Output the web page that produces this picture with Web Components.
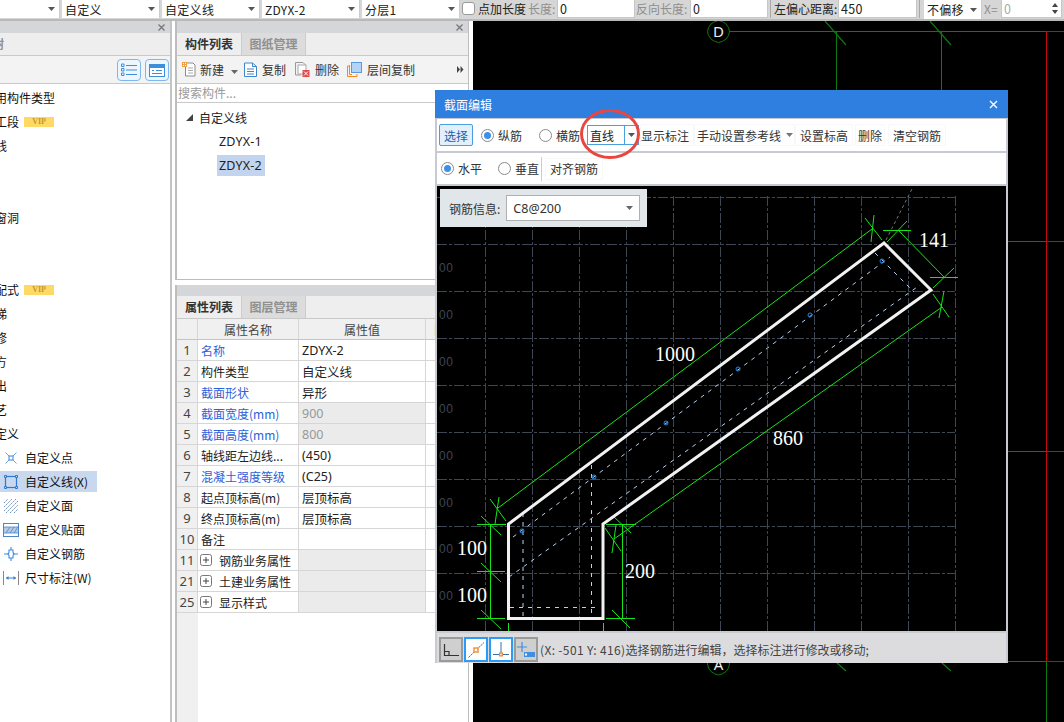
<!DOCTYPE html>
<html lang="zh"><head><meta charset="utf-8"><title>截面编辑</title>
<style>
html,body{margin:0;padding:0;height:100%;overflow:hidden;background:#fff}
body{position:relative;width:1064px;height:722px;font:12px "Noto Sans CJK SC","Noto Sans",sans-serif;color:#222;display:flex;flex-direction:column}
</style></head><body>
<app-bar></app-bar>
<work-area></work-area>
<section-dialog></section-dialog>
<script>
const FONT='"Noto Sans","Noto Sans CJK SC",sans-serif';
function def(name,css,html,init){
  customElements.define(name,class extends HTMLElement{
    constructor(){super();const r=this.attachShadow({mode:'open'});
      r.innerHTML='<style>:host{box-sizing:border-box}*{box-sizing:border-box}'+css+'</style>'+(typeof html==='function'?html(this):html);
      if(init)init(r,this);}
  });
}
const caret=(c='#555')=>`<svg width="7" height="4" viewBox="0 0 7 4" style="flex:none"><path d="M0 0h7L3.500 4z" fill="${c}"/></svg>`;

/* ---- top toolbar ---- */
def('tb-select',`:host{display:flex;align-items:center;height:18px;background:#fff;padding:0 4px 0 3px;flex:none;white-space:nowrap;border-right:1px solid #ccc}
 span{flex:1;font-size:12px;color:#222;letter-spacing:.3px;overflow:hidden}`,`<span><slot></slot></span>${caret()}`);
def('tb-input',`:host{display:flex;align-items:center;height:18px;background:#fff;padding:0 2px;flex:none;border:1px solid #c6c6c6;border-top:0;font-size:12.500px;letter-spacing:.3px}
 :host([off]){color:#aaa}`,`<slot></slot>`);
def('app-bar',`:host{display:flex;flex:none;height:21px;background:#d6d6d6;border-bottom:2px solid #b9b9b9;gap:2px;white-space:nowrap;font-size:12px;color:#222;overflow:hidden}
 .g{color:#8e8e8e}.t{flex:none;height:18px;line-height:18px}.sep{width:1px;height:18px;background:#a9a9a9;flex:none}
 .ck{width:13px;height:13px;background:#fff;border:1px solid #9a9a9a;border-radius:3px;flex:none;margin-top:2px}
 .spin{margin-left:auto;display:flex;flex-direction:column;gap:3px;margin-right:1px}
 .tri{width:0;height:0;border:3px solid transparent;border-top:0;border-bottom:4px solid #444;box-sizing:content-box}.tri.d{transform:rotate(180deg)}`,
`<tb-select style="width:98px;margin-left:-38px"></tb-select>
 <tb-select style="width:98px">自定义</tb-select><tb-select style="width:98px">自定义线</tb-select>
 <tb-select style="width:98px;font-family:${FONT}">ZDYX-2</tb-select><tb-select style="width:98px">分层1</tb-select>
 <span class="ck"></span><span class="t" style="margin-left:1px;width:49px">点加长度</span><span class="t g" style="margin-left:-1px;width:27px">长度:</span>
 <tb-input style="width:78px;font-family:${FONT}">0</tb-input><span class="t g" style="margin-left:-1px;width:52px">反向长度:</span>
 <tb-input style="width:78px;font-family:${FONT}">0</tb-input><span class="sep"></span>
 <span class="t" style="margin-left:1px;width:62px">左偏心距离:</span><tb-input style="width:79px;font-family:${FONT}">450</tb-input>
 <span class="sep"></span><tb-select style="width:58px;margin-left:2px;height:19px">不偏移</tb-select>
 <span class="t g" style="width:15px">X=</span><tb-input off style="width:61px;font-family:${FONT}">0<span class="spin"><i class="tri"></i><i class="tri d"></i></span></tb-input>
 <span class="t" style="font-family:${FONT}">m</span>`);

/* ---- shared panel bits ---- */
def('panel-head',`:host{display:flex;justify-content:flex-end;align-items:center;height:12px;background:#d4d6da;padding-right:5px;flex:none;color:#777}
 svg{display:block}`,`<svg width="7" height="7" viewBox="0 0 7 7"><path d="M.5.500l6 6M6.500.500l-6 6" stroke="#777" stroke-width="1.300"/></svg>`);
def('tab-row',`:host{display:flex;height:23px;background:#eee;border-bottom:1px solid #c9c9c9;flex:none;font-size:12px;line-height:22px;white-space:nowrap}
 ::slotted(b){width:64px;text-align:center;font-weight:700;color:#333;flex:none}
 ::slotted(i){width:65px;text-align:center;font-style:normal;font-weight:700;color:#909090;background:#dcdcdc;border-left:1px solid #ccc;border-right:1px solid #ccc;flex:none}`,`<slot></slot>`);

/* ---- left panel ---- */
def('vip-tag',`:host{display:inline-flex;align-items:center;justify-content:center;width:30px;height:10px;background:#ffd966;color:#c39a2a;font:bold 8px "Liberation Serif",serif;margin-left:5px;flex:none}`,`VIP`);
const leftIcons={
 point:'<path d="M2.500 2.500l3.500 3.500M13.500 2.500L10 6M2.500 13.500L6 10M13.500 13.500L10 10" stroke="#6aa6e6"/><rect x="6" y="6" width="4" height="4" fill="none" stroke="#3b82d8"/>',
 line:'<rect x="2.500" y="2.500" width="11" height="11" fill="none" stroke="#2f78d4" stroke-width="1.200"/><path d="M1.500 1.500h2v2h-2zM12.500 1.500h2v2h-2zM1.500 12.500h2v2h-2zM12.500 12.500h2v2h-2z" fill="#c7d8ef" stroke="#2f78d4"/>',
 hatch:'<path d="M1 5l4-4M1 9l8-8M1 13l12-12M3 15L15 3M7 15l8-8M11 15l4-4" stroke="#6f8fb8" stroke-dasharray="2 1"/>',
 patch:'<rect x=".5" y="1.500" width="15" height="13" fill="none" stroke="#4a86c8"/><rect x="1" y="5" width="14" height="6" fill="#b8cbe6"/><path d="M.5 5h15M.5 11h15M3 11l4-6M7 11l4-6M11 11l4-6" stroke="#4a86c8" stroke-width=".8"/>',
 rebar:'<path d="M8 1v3M8 12v3M1 8h3c1.500 0 2-1 2-2V4h4v2c0 1 .5 2 2 2h3M4 8c1.500 0 2 1 2 2v2h4v-2c0-1 .5-2 2-2" fill="none" stroke="#3f8ae0" stroke-width="1.100"/>',
 dim:'<path d="M.5 1v14" stroke="#888"/><path d="M15.500 1v14" stroke="#888"/><path d="M3 8h10" stroke="#3f7fc8"/><path d="M3 8l2.500-2v4zM13 8l-2.500-2v4z" fill="#3f7fc8"/>'
};
def('tree-row',`:host{display:flex;align-items:center;height:21px;margin-bottom:3px;white-space:nowrap;font-size:12px;color:#111}
 :host([cut]){margin-left:-17px}
 :host([sub]){width:97px;padding-left:3px}
 :host([sel]){background:#c7d8ef}
 .ic{width:16px;height:16px;margin-right:6px;flex:none}`,
 h=>{const i=h.getAttribute('icon');return (i?`<svg class="ic" viewBox="0 0 16 16">${leftIcons[i]}</svg>`:'')+'<slot></slot>'});
def('left-panel',`:host{display:flex;flex-direction:column;width:172px;flex:none;overflow:hidden;background:#fff;border-right:2px solid #c4c4c4}
 .tools{display:flex;justify-content:flex-end;gap:4px;padding:3px 1px 2px;height:28px;background:#f3f3f3;border-bottom:1px solid #c9c9c9;flex:none}
 .btn{width:24px;height:22px;border:1px solid #7db7ee;border-radius:4px;background:#eef6fd;display:flex;align-items:center;justify-content:center}
 .list{padding-top:3px;flex:1}
 .tab{margin-left:-32px;color:#909090;font-size:12px;line-height:22px;flex:none;white-space:nowrap;font-weight:700}`,
`<panel-head></panel-head>
 <tab-row><span class="tab">导航树</span></tab-row>
 <div class="tools">
  <span class="btn"><svg width="16" height="14" viewBox="0 0 16 14"><path d="M5 2.500h11M5 7h11M5 11.500h11" stroke="#3d8fdc"/><path d="M.5 1h2.500v2.500H.5zM.5 5.500h2.500V8H.5zM.5 10h2.500v2.500H.5z" fill="none" stroke="#3d8fdc"/></svg></span>
  <span class="btn"><svg width="16" height="13" viewBox="0 0 16 13"><rect x=".5" y=".5" width="15" height="12" fill="#fff" stroke="#3d8fdc"/><rect x="1" y="1" width="14" height="3" fill="#3d8fdc"/><path d="M3 6.500h2M7 6.500h6M3 9.500h10" stroke="#3d8fdc"/></svg></span>
 </div>
 <div class="list">
  <tree-row cut>常用构件类型</tree-row>
  <tree-row cut>施工段<vip-tag></vip-tag></tree-row>
  <tree-row cut>轴线</tree-row><tree-row></tree-row><tree-row></tree-row>
  <tree-row cut>门窗洞</tree-row><tree-row></tree-row><tree-row></tree-row>
  <tree-row cut>装配式<vip-tag></vip-tag></tree-row>
  <tree-row cut>楼梯</tree-row><tree-row cut>装修</tree-row><tree-row cut>土方</tree-row>
  <tree-row cut>挑出</tree-row><tree-row cut>工艺</tree-row><tree-row cut>自定义</tree-row>
  <tree-row sub icon="point">自定义点</tree-row>
  <tree-row sub sel icon="line">自定义线(X)</tree-row>
  <tree-row sub icon="hatch">自定义面</tree-row>
  <tree-row sub icon="patch">自定义贴面</tree-row>
  <tree-row sub icon="rebar">自定义钢筋</tree-row>
  <tree-row sub icon="dim">尺寸标注(W)</tree-row>
 </div>`);

/* ---- component list ---- */
def('comp-panel',`:host{display:flex;flex-direction:column;height:259px;flex:none;background:#fff;border:solid #bdbdbd;border-width:0 1px 1px 2px}
 .tools{display:flex;align-items:center;height:28px;background:#f3f3f3;border-bottom:1px solid #c9c9c9;flex:none;white-space:nowrap;color:#333;font-size:12px;padding-left:5px}
 .tools svg{flex:none}.tools span{flex:none}
 .more{margin-left:auto;margin-right:4px}
 .search{height:19px;line-height:18px;padding-left:1px;color:#9a9a9a;border-bottom:1px solid #c9c9c9;flex:none;font-size:12px}
 .tree{padding-top:4px;font-size:12px;color:#222}
 .r{height:21px;line-height:21px;margin-bottom:3px;display:flex;align-items:center;white-space:nowrap}
 .c{margin-left:40px;width:48px;padding-left:2px;font-family:${FONT};font-size:12.500px;letter-spacing:.2px;color:#222}
 .sel{background:#c3d5ee}`,
`<panel-head></panel-head>
 <tab-row><b>构件列表</b><i>图纸管理</i></tab-row>
 <div class="tools">
  <svg width="14" height="15" viewBox="0 0 14 15"><path d="M3.500 1H11l2 2v11H3.500z" fill="#fff" stroke="#8c8c8c"/><path d="M6 6h5M6 8.500h5M6 11h5" stroke="#aaa"/><path d="M0 0h5v5H0z" fill="#f0a040"/><path d="M1 1h1v1H1zM3 3h1v1H3zM3 1h1v1H3zM1 3h1v1H1z" fill="#fff"/></svg>
  <span style="margin-left:4px">新建</span><span style="margin:-3px 0 0 7px">${caret('#666')}</span>
  <svg style="margin-left:6px" width="13" height="15" viewBox="0 0 13 15"><path d="M.5 1h8l4 3.500v10H.5z" fill="#fff" stroke="#3d86c8"/><path d="M8.500 1v3.500h4M3 7h7M3 9.500h7M3 12h7" fill="none" stroke="#3d86c8"/></svg>
  <span style="margin-left:5px">复制</span>
  <svg style="margin-left:9px" width="15" height="15" viewBox="0 0 15 15"><path d="M.5.500H8l2 2V5M.5.500V13H6" fill="none" stroke="#999"/><rect x="3" y="3" width="8" height="9" fill="#fff" stroke="#aaa"/><rect x="7.500" y="8" width="7" height="7" fill="#e04a4a"/><path d="M9 9.500l4 4M13 9.500l-4 4" stroke="#fff"/></svg>
  <span style="margin-left:5px">删除</span>
  <svg style="margin-left:8px" width="15" height="15" viewBox="0 0 15 15"><path d="M3 4H.5v10.500H10V12" fill="none" stroke="#f08a24"/><path d="M1.500 3v9.500H4" fill="none" stroke="#f08a24" transform="translate(1,0)"/><rect x="4.500" y=".5" width="10" height="10" fill="#b3d4f5" stroke="#5a9ae0"/></svg>
  <span style="margin-left:5px">层间复制</span>
  <svg class="more" width="7" height="7" viewBox="0 0 7 7"><path d="M0 0l3 3.500-3 3.500zM3.500 0l3 3.500-3 3.500z" fill="#444"/></svg>
 </div>
 <div class="search">搜索构件...</div>
 <div class="tree">
  <div class="r"><svg style="margin:0 6px 0 9px" width="7" height="7" viewBox="0 0 7 7"><path d="M7 0v7H0z" fill="#444"/></svg>自定义线</div>
  <div class="r"><span class="c">ZDYX-1</span></div>
  <div class="r"><span class="c sel">ZDYX-2</span></div>
 </div>`);

/* ---- property table ---- */
const ROWS=[[1,'名称','ZDYX-2',1],[2,'构件类型','自定义线'],[3,'截面形状','异形',1],[4,'截面宽度(mm)','900',1,1],[5,'截面高度(mm)','800',1,1],[6,'轴线距左边线...','(450)'],[7,'混凝土强度等级','(C25)',1],[8,'起点顶标高(m)','层顶标高'],[9,'终点顶标高(m)','层顶标高'],[10,'备注','']];
const GRP=[[11,'钢筋业务属性'],[21,'土建业务属性'],[25,'显示样式']];
const plus='<svg style="margin-right:7px;flex:none" width="12" height="12" viewBox="0 0 12 12"><rect x=".5" y=".5" width="11" height="11" rx="2" fill="#fff" stroke="#777"/><path d="M3 6h6M6 3v6" stroke="#444"/></svg>';
def('prop-panel',`:host{display:flex;flex-direction:column;flex:1;min-height:0;background:#fff;border-left:2px solid #bdbdbd;border-right:1px solid #bdbdbd;font-size:12px;margin-top:5px}
 panel-head{height:11px}
 .grid{flex:1;display:grid;grid-template-columns:21px 101px 127px 1fr;grid-auto-rows:21px;align-content:start;background:linear-gradient(90deg,#f0f0f0 21px,#fff 21px)}
 .grid>div{border-right:1px solid #d6d6d6;border-bottom:1px solid #d6d6d6;display:flex;align-items:center;padding-left:3px;white-space:nowrap;overflow:hidden;color:#222}
 .grid .n{background:#f0f0f0;justify-content:center;padding:0;color:#444;font-family:${FONT};font-size:13px}
 .grid .h{background:#f0f0f0;justify-content:center;color:#444;border-bottom-color:#c4c4c4;padding:0}
 .b{color:#2b62d9!important}.gv{background:#ebebeb;color:#999!important}
 .lat{font-family:"Noto Sans","Noto Sans CJK SC",sans-serif;font-size:12.500px}`,
 ()=>`<panel-head></panel-head><tab-row><b>属性列表</b><i>图层管理</i></tab-row><div class="grid">
  <div class="h"></div><div class="h">属性名称</div><div class="h">属性值</div><div class="h" style="justify-content:flex-start;padding-left:8px;color:#ecb88a">附加</div>
  ${ROWS.map(r=>`<div class="n">${r[0]}</div><div class="${r[3]?'b':''}">${r[1]}</div><div class="lat ${r[4]?'gv':''}">${r[2]}</div><div></div>`).join('')}
  ${GRP.map(r=>`<div class="n">${r[0]}</div><div style="padding-left:2px;overflow:visible">${plus}${r[1]}</div><div class="gv"></div><div></div>`).join('')}
 </div>`);

def('comp-column',`:host{display:flex;flex-direction:column;width:294px;margin-left:3px;flex:none}`,`<comp-panel></comp-panel><prop-panel></prop-panel>`);

/* ---- background CAD ---- */
def('cad-view',`:host{display:block;flex:1;background:#000;min-width:0;overflow:hidden;margin-left:4px}svg{display:block}`,
`<svg width="591" height="701" viewBox="473 21 591 701" shape-rendering="crispEdges">
  <g stroke="#0c7a0c" stroke-width="1" fill="none">
   <path d="M729 31.500H1046M836.500 31.500V90M941.500 31.500V90M1008 241.500h38M1008 451.500h38M1008 661.500h38M1046.500 661.500V722"/>
   <path shape-rendering="auto" d="M825 21l21 24M930 21l21 24M837 663l9 8M942 663l9 8" stroke-width="1.200"/>
   <path shape-rendering="auto" d="M718.500 20.500l4 1.200 3.500 2.300 2.500 3.500 1 4-1 4-2.500 3.500-3.500 2.300-4 1.200-4-1.200-3.500-2.300-2.500-3.500-1-4 1-4 2.500-3.500 3.500-2.300z"/>
   <path shape-rendering="auto" d="M718.500 653l4 1.200 3.500 2.300 2.500 3.500 1 4-1 4-2.500 3.500-3.500 2.300-4 1.200-4-1.200-3.500-2.300-2.500-3.500-1-4 1-4 2.500-3.500 3.500-2.300z"/>
  </g>
  <g stroke="#c80a0a" stroke-width="1" fill="none"><path d="M1064 31.500h-17.500V661.500M1047 241.500h17M1047 451.500h17M1047 661.500h17"/></g>
  <text x="718.500" y="37" text-anchor="middle" font-family="Noto Sans,sans-serif" font-size="15" fill="#eee">D</text>
  <text x="718.500" y="670" text-anchor="middle" font-family="Noto Sans,sans-serif" font-size="15" fill="#eee">A</text>
 </svg>`);

def('work-area',`:host{display:flex;flex:1;min-height:0;position:relative}`,`<left-panel></left-panel><comp-column></comp-column><cad-view></cad-view>`);

/* ---- dialog ---- */
def('dlg-btn',`:host{display:inline-flex;align-items:center;height:22px;padding:0 4px;margin-right:2px;border:1px solid #f8f8f8;border-radius:2px;font-size:12px;color:#333;white-space:nowrap;flex:none}
 :host([active]){background:#e3f0fb;border-color:#4a9fe0;color:#1f5fa8}`,`<slot></slot>`);
def('dlg-radio',`:host{display:inline-flex;align-items:center;font-size:12px;color:#333;white-space:nowrap;flex:none}
 i{display:flex;align-items:center;justify-content:center;width:13px;height:13px;border:1px solid #8a8a8a;border-radius:50%;margin-right:4px;background:#fff}
 :host([on]) i::after{content:"";width:7px;height:7px;border-radius:50%;background:#3e8fe6}`,`<i></i><slot></slot>`);
def('rebar-canvas',`:host{display:block;position:relative;height:445px;background:#000;flex:none;overflow:hidden}
 .draw{display:block;position:absolute;left:0;top:0}
 .info{position:absolute;left:3px;top:3px;width:207px;height:38px;background:#e0e6e9;display:flex;align-items:center;padding-left:9px;font-size:12px;color:#333;white-space:nowrap}
 .sel{margin-left:6px;width:134px;height:26px;background:#fff;border:1px solid #b0b0b0;display:flex;align-items:center;justify-content:space-between;padding:0 6px;font-family:${FONT};font-size:12.500px;color:#333}`,
 ()=>{
  let g='';
  for(let i=0;i<11;i++){const x=485.5+i*47;g+=`<path d="M${x} 196V631"/>`;}
  for(let i=0;i<9;i++){const y=196.5+i*47.1;g+=`<path d="M437 ${Math.round(y)+.5}H955"/>`;}
  let labels='';
  [267,314,361,408,455,502,548,595].forEach(y=>{labels+=`<text x="439" y="${y+5}">00</text>`;});
  const dots=[[882,261],[810,315],[738,369],[666,423],[594,477],[522,531]].map(p=>`<circle cx="${p[0]}" cy="${p[1]}" r="2"/>`).join('');
  return `<svg class="draw" width="569" height="445" viewBox="437 186 569 445">
  <g stroke="#3e4654" stroke-dasharray="10 2 3 2" shape-rendering="crispEdges">${g}</g>
  <g font-family="Liberation Sans,sans-serif" font-size="12" fill="#3e4654" letter-spacing=".5">${labels}</g>
  <g stroke="#b5d2f0" stroke-dasharray="4 5" fill="none">
   <path d="M513 537L890 257M509 577L920 285M875 253L914 292M523 513V618M591.500 465V618M510 607.500H600"/>
  </g>
  <g stroke="#1d8df0" fill="none">${dots}</g>
  <path d="M886 240L913 187" stroke="#777" stroke-dasharray="3 3"/>
  <g stroke="#16e616" stroke-width="1" fill="none">
   <path d="M498 508L872 229M865 218L882 240M874 215L871 242M490 499L506 521M499 497L495 524"/>
   <path d="M942 307L614 539M933 294L949 317M944 291L939 318M605 528L621 551M616 525L612 553"/>
   <path d="M887 242L907 221M883 230.500H911M898 230L944 277M930 277.500H958M933 288L954 268"/>
   <path d="M490.500 524V618M477 524.500H506M477 571.500H505M477 618.500H505M481 516L501 535M481 563L501 582M481 610L501 629"/>
   <path d="M622.500 524V618M606 524.500H636M606 618.500H635M613 516L631 533M612 610L630 628M508.500 623V631M603.500 623V631"/>
  </g>
  <path d="M508.500 618.500V524L884 243L931 290L603 524V618.500Z" fill="none" stroke="#f2f2f2" stroke-width="3" stroke-linejoin="miter"/>
  <g font-family="Liberation Serif,serif" font-size="20" fill="#fff">
   <text x="655" y="361">1000</text><text x="919" y="247">141</text><text x="773" y="445">860</text>
   <text x="457" y="555">100</text><text x="457" y="602">100</text><text x="625" y="578">200</text>
  </g></svg>
  <div class="info">钢筋信息:<div class="sel">C8@200${caret('#666')}</div></div>`;
 });
def('status-bar',`:host{display:flex;align-items:center;height:30px;background:#dcdcde;padding:3px 0 0 2px;flex:none;font-size:12px;color:#444;white-space:nowrap;gap:1px;overflow:hidden}
 .b{width:24px;height:25px;display:flex;align-items:center;justify-content:center;border:2px solid #9a9a9a;background:#cfcfcf;flex:none}
 .on{border-color:#2a9bf8;background:#fff}
 .tx{margin-left:1px;flex:none}.la{letter-spacing:.35px}`,
`<span class="b"><svg width="18" height="14" viewBox="0 0 18 14"><path d="M2.500 1v11.500H17M2.500 8.500H7v4" fill="none" stroke="#333" stroke-width="1.200"/></svg></span>
 <span class="b on"><svg width="18" height="18" viewBox="0 0 18 18"><path d="M1.500 16.500L17 1.500" stroke="#3a6ea8" stroke-dasharray="2 .8"/><rect x="7" y="7" width="4" height="4" fill="#fff" stroke="#f28a2c" stroke-width="1.400"/></svg></span>
 <span class="b on"><svg width="18" height="18" viewBox="0 0 18 18"><path d="M9 1v14M1 13.500h16" stroke="#3a6ea8"/><rect x="7" y="11.500" width="4" height="4" fill="#f28a2c"/><rect x="8.300" y="12.800" width="1.400" height="1.400" fill="#fff"/></svg></span>
 <span class="b"><svg width="18" height="18" viewBox="0 0 18 18"><path d="M5 1v10M0 6h10" stroke="#3f8ee0" stroke-width="1.200"/><rect x="7" y="11" width="11" height="5" fill="#3f8ee0"/><rect x="8" y="12.500" width="2" height="2" fill="#fff"/></svg></span>
 <span class="tx"><span class="la">(X: -501 Y: 416)</span>选择钢筋进行编辑，选择标注进行修改或移动;</span>`);
def('section-dialog',`:host{position:absolute;left:435px;top:90px;width:573px;height:573px;display:flex;flex-direction:column;background:#c7cbd1}
 .title{height:28px;background:#2e7fe0;color:#fff;display:flex;align-items:center;justify-content:space-between;padding:0 10px 0 9px;font-size:12px;flex:none}
 .body{flex:1;display:flex;flex-direction:column;gap:2px;padding:1px 2px 0 2px}
 .row{display:flex;align-items:center;background:#fff;flex:none}
 .r1{height:32px;padding-left:2px}.r2{height:31px;padding-left:4px}
 .split{display:flex;align-items:center;width:52px;height:20px;border:1px solid #4a9fe0;font-size:12px;color:#222;flex:none;margin-right:1px}
 .split span{flex:1;padding-left:2px}.split i{width:14px;height:100%;border-left:1px solid #4a9fe0;display:flex;align-items:center;justify-content:center}
 .sp{width:1px;height:24px;background:#ccc;margin:0 3px 0 2px;flex:none}
 .ring{position:absolute;left:145px;top:19px;pointer-events:none}`,
`<div class="title"><span>截面编辑</span><svg width="9" height="9" viewBox="0 0 9 9"><path d="M1 1l7 7M8 1L1 8" stroke="#fff" stroke-width="1.400"/></svg></div>
 <div class="body">
  <div class="row r1"><dlg-btn active style="margin-right:8px">选择</dlg-btn><dlg-radio on style="margin-right:17px">纵筋</dlg-radio><dlg-radio style="margin-right:7px">横筋</dlg-radio>
   <span class="split"><span>直线</span><i>${caret('#555')}</i></span>
   <dlg-btn style="margin-right:0;padding-left:0">显示标注</dlg-btn><dlg-btn style="margin-right:0;padding:0 1px 0 2px">手动设置参考线<span style="margin-left:5px;display:flex">${caret('#777')}</span></dlg-btn><dlg-btn>设置标高</dlg-btn><dlg-btn style="padding:0 2px;margin-right:3px">删除</dlg-btn><dlg-btn>清空钢筋</dlg-btn></div>
  <div class="row r2"><dlg-radio on style="margin-right:16px">水平</dlg-radio><dlg-radio>垂直</dlg-radio><span class="sp"></span><dlg-btn>对齐钢筋</dlg-btn></div>
  <rebar-canvas></rebar-canvas>
  <status-bar></status-bar>
 </div>
 <svg class="ring" width="60" height="50" viewBox="0 0 60 50"><ellipse cx="30" cy="25" rx="28.500" ry="23.500" fill="none" stroke="#e8463e" stroke-width="3"/></svg>`);
</script>
</body></html>
